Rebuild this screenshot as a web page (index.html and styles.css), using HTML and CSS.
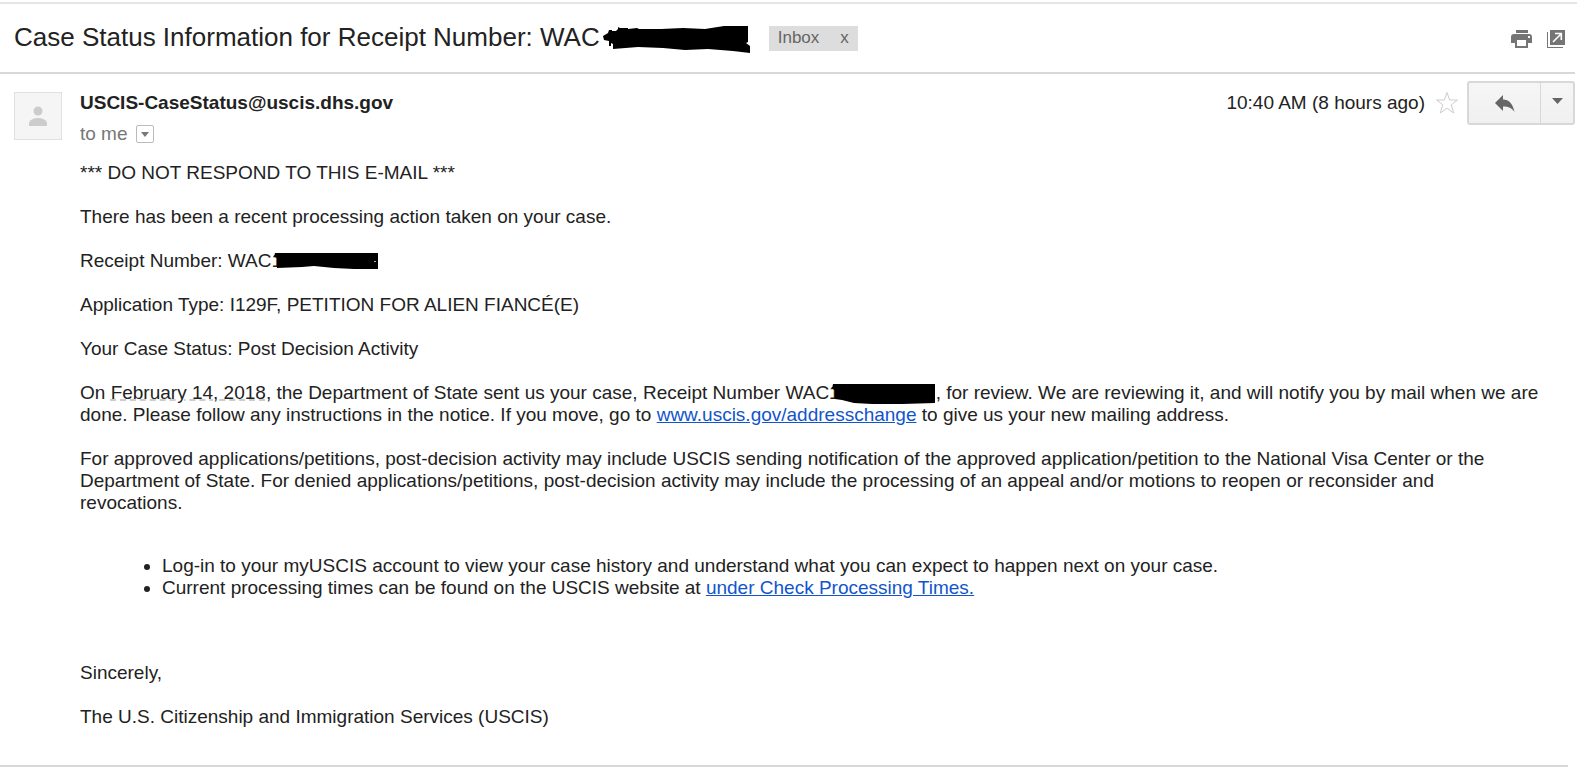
FILE: index.html
```
<!DOCTYPE html>
<html lang="en">
<head>
    <meta charset="UTF-8">
    <meta name="viewport" content="width=device-width, initial-scale=1.0">
    <title>Case Status Information</title>
    <link rel="stylesheet" href="styles.css">
</head>
<body>
    <main class="mail">
        <header class="subject-bar">
            <h1 class="subject">Case Status Information for Receipt Number: WAC<svg class="redacted redacted-subject" width="148" height="28" viewBox="0 0 148 28" role="img" aria-label="redacted"><path d="M0 10L5 7L6 4H9V5H13L15 3V1L17 2H25V3L34 2L36 3L58 3L80 2L102 3L121 0H145V16L143 17L147 20V27L130 25L105 23L82 24L60 22L35 21L10 23V18L8 17V20H6V15L1 14Z"/></svg></h1>
            <div class="label">
                <span>Inbox</span>
                <button class="label-remove" type="button" aria-label="Remove label Inbox">x</button>
            </div>
            <div class="subject-actions">
                <button class="icon-button" type="button" aria-label="Print all">
                    <svg width="21" height="18" viewBox="0 0 21 18"><path fill="#757575" d="M5 0H17V3H5ZM3 4H18Q21 4 21 7V13H17V18H4V13H0V7Q0 4 3 4ZM6 10V16H15V10ZM17 6V8H19V6Z" fill-rule="evenodd"/></svg>
                </button>
                <button class="icon-button" type="button" aria-label="In new window">
                    <svg width="18" height="18" viewBox="0 0 18 18"><path fill="#757575" d="M0 2H1V17H16V18H0ZM3 0H18V15H3Z"/><path fill="none" stroke="#fff" stroke-width="1.6" d="M6 12L14 4M8 3.5H14.3V10"/></svg>
                </button>
            </div>
        </header>

        <article class="message">
            <div class="avatar">
                <svg width="18" height="20" viewBox="0 0 18 20"><circle cx="9" cy="5" r="4.5" fill="#ccc"/><path fill="#ccc" d="M0 20V16.500Q2 12 9 12T18 16.500V20Z"/></svg>
            </div>
            <div class="message-main">
                <div class="message-head">
                    <div class="sender">
                        <h2 class="sender-name">USCIS-CaseStatus@uscis.dhs.gov</h2>
                        <div class="recipient">
                            <span>to me</span>
                            <button class="details-button" type="button" aria-label="Show details">
                                <svg width="8" height="5" viewBox="0 0 8 5"><path fill="#777" d="M0 0H8L4 5Z"/></svg>
                            </button>
                        </div>
                    </div>
                    <div class="message-tools">
                        <span class="time">10:40 AM (8 hours ago)</span>
                        <button class="icon-button star" type="button" aria-label="Star">
                            <svg width="24" height="24" viewBox="0 0 24 24"><path fill="#fff" stroke="#ccc" d="M12 1.500L14.600 9H22.500L16.200 13.800L18.700 22L12 17.200L5.300 22L7.800 13.800L1.500 9H9.400Z"/></svg>
                        </button>
                        <div class="reply-group">
                            <button class="reply-button" type="button" aria-label="Reply">
                                <svg width="20" height="17" viewBox="0 0 20 17"><path fill="#666" d="M0 8L8 0V4.500C14 4.500 18 9 19.500 17C17 13 13.500 11.500 8 11.500V16Z"/></svg>
                            </button>
                            <button class="more-button" type="button" aria-label="More">
                                <svg width="11" height="6" viewBox="0 0 11 6"><path fill="#666" d="M0 0H11L5.500 6Z"/></svg>
                            </button>
                        </div>
                    </div>
                </div>

                <div class="message-body">
                    <p>*** DO NOT RESPOND TO THIS E-MAIL ***</p>
                    <p>There has been a recent processing action taken on your case.</p>
                    <p>Receipt Number: WAC1<svg class="redacted" width="104" height="18" viewBox="0 0 104 18" role="img" aria-label="redacted"><path d="M1 1H104V17H80L60 16L40 14L28 15L3 16L3 6L0 5Z"/><path fill="#bbb" d="M100 9H102V10H100Z"/></svg></p>
                    <p>Application Type: I129F, PETITION FOR ALIEN FIANCÉ(E)</p>
                    <p>Your Case Status: Post Decision Activity</p>
                    <p>On <span class="date">February 14, 2018</span>, the Department of State sent us your case, Receipt Number WAC1<svg class="redacted redacted-inline" width="104" height="20" viewBox="0 0 104 20" role="img" aria-label="redacted"><path d="M1 0H103V19L70 20H40L22 19L10 16L3 15V6L0 5Z"/></svg>, for review. We are reviewing it, and will notify you by mail when we are done. Please follow any instructions in the notice. If you move, go to <a href="#">www.uscis.gov/addresschange</a> to give us your new mailing address.</p>
                    <p>For approved applications/petitions, post-decision activity may include USCIS sending notification of the approved application/petition to the National Visa Center or the Department of State. For denied applications/petitions, post-decision activity may include the processing of an appeal and/or motions to reopen or reconsider and<br>revocations.</p>
                    <ul>
                        <li>Log-in to your myUSCIS account to view your case history and understand what you can expect to happen next on your case.</li>
                        <li>Current processing times can be found on the USCIS website at <a href="#">under Check Processing Times.</a></li>
                    </ul>
                    <p>Sincerely,</p>
                    <p>The U.S. Citizenship and Immigration Services (USCIS)</p>
                </div>
            </div>
        </article>
    </main>
</body>
</html>
```
FILE: styles.css
```
* {
    box-sizing: border-box;
}

body {
    margin: 0;
    background-color: #fff;
    color: #222;
    font-family: "Liberation Sans", Arial, sans-serif;
    font-size: 19px;
    line-height: 22px;
}

button {
    display: flex;
    align-items: center;
    justify-content: center;
    padding: 0;
    border: none;
    background: none;
    font: inherit;
    color: inherit;
    cursor: pointer;
}

.mail {
    margin-top: 2px;
    border-top: 2px solid #e5e5e5;
}

/* Subject line */
.subject-bar {
    display: flex;
    align-items: center;
    height: 70px;
    margin-right: 2px;
    padding: 0 10px 2px 14px;
    border-bottom: 2px solid #d8d8d8;
}

.subject {
    margin: 0;
    font-size: 26px;
    font-weight: normal;
    line-height: 32px;
    white-space: nowrap;
}

/* Scribbled-out receipt numbers */
.redacted {
    margin-left: -8px;
    vertical-align: -3px;
}

.redacted-inline {
    vertical-align: -5px;
}

.redacted-subject {
    margin-left: 3px;
    vertical-align: -8px;
}

.label {
    display: flex;
    align-items: center;
    gap: 21px;
    height: 25px;
    margin: 2px 0 0 18px;
    padding: 0 9px;
    background-color: #ddd;
    color: #666;
    font-size: 17px;
}

.subject-actions {
    display: flex;
    gap: 15px;
    margin: 4px 0 0 auto;
}

/* Message */
.message {
    display: flex;
    gap: 18px;
    margin-right: 9px;
    padding: 7px 0 15px 14px;
    border-bottom: 2px solid #d8d8d8;
}

.avatar {
    display: flex;
    flex: none;
    align-items: center;
    justify-content: center;
    width: 48px;
    height: 48px;
    margin-top: 11px;
    border: 1px solid #e0e0e0;
    background-color: #f5f5f5;
}

.message-main {
    flex: 1;
}

.message-head {
    display: flex;
    justify-content: space-between;
    margin-right: -7px;
}

.sender {
    padding-top: 11px;
}

.sender-name {
    margin: 0;
    font-size: 19px;
    line-height: 22px;
}

.recipient {
    display: flex;
    align-items: center;
    gap: 8px;
    margin-top: 9px;
    color: #777;
}

.details-button {
    width: 18px;
    height: 18px;
    border: 1px solid #bbb;
    border-radius: 2px;
}

.message-tools {
    display: flex;
    align-items: center;
    height: 44px;
}

.star {
    margin: 0 8px 0 10px;
}

.reply-group {
    display: flex;
    height: 44px;
    border: 2px solid #d8d8d8;
    border-radius: 3px;
    background-image: linear-gradient(#f6f6f6, #f0f0f0);
}

.reply-button {
    width: 71px;
}

.more-button {
    width: 33px;
    padding-bottom: 4px;
    border-left: 1px solid #d8d8d8;
}

.message-body {
    padding: 17px 12px 0 0;
}

.message-body p {
    margin: 0 0 22px;
}

.message-body ul {
    margin: 41px 0 63px;
    padding-left: 82px;
}

.message-body a {
    color: #15c;
}

.date {
    text-decoration: underline dashed #ccc;
}
```
